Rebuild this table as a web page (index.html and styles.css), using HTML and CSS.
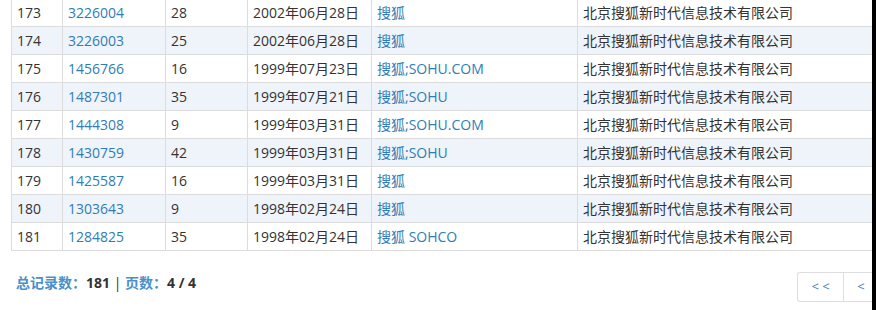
FILE: index.html
```html
<!DOCTYPE html>
<html lang="zh">
<head>
<meta charset="utf-8">
<link rel="stylesheet" href="styles.css">
</head>
<body>
<div class="frame">
  <div class="content">
    <table class="grid">
      <colgroup>
        <col class="c1"><col class="c2"><col class="c3"><col class="c4"><col class="c5"><col class="c6">
      </colgroup>
      <tbody>
        <tr><td>173</td><td><a>3226004</a></td><td>28</td><td>2002年06月28日</td><td><a>搜狐</a></td><td>北京搜狐新时代信息技术有限公司</td></tr>
        <tr><td>174</td><td><a>3226003</a></td><td>25</td><td>2002年06月28日</td><td><a>搜狐</a></td><td>北京搜狐新时代信息技术有限公司</td></tr>
        <tr><td>175</td><td><a>1456766</a></td><td>16</td><td>1999年07月23日</td><td><a>搜狐;SOHU.COM</a></td><td>北京搜狐新时代信息技术有限公司</td></tr>
        <tr><td>176</td><td><a>1487301</a></td><td>35</td><td>1999年07月21日</td><td><a>搜狐;SOHU</a></td><td>北京搜狐新时代信息技术有限公司</td></tr>
        <tr><td>177</td><td><a>1444308</a></td><td>9</td><td>1999年03月31日</td><td><a>搜狐;SOHU.COM</a></td><td>北京搜狐新时代信息技术有限公司</td></tr>
        <tr><td>178</td><td><a>1430759</a></td><td>42</td><td>1999年03月31日</td><td><a>搜狐;SOHU</a></td><td>北京搜狐新时代信息技术有限公司</td></tr>
        <tr><td>179</td><td><a>1425587</a></td><td>16</td><td>1999年03月31日</td><td><a>搜狐</a></td><td>北京搜狐新时代信息技术有限公司</td></tr>
        <tr><td>180</td><td><a>1303643</a></td><td>9</td><td>1998年02月24日</td><td><a>搜狐</a></td><td>北京搜狐新时代信息技术有限公司</td></tr>
        <tr><td>181</td><td><a>1284825</a></td><td>35</td><td>1998年02月24日</td><td><a>搜狐 SOHCO</a></td><td>北京搜狐新时代信息技术有限公司</td></tr>
      </tbody>
    </table>
    <div class="footer">
      <div class="summary">
        <span class="label">总记录数：</span><b>181</b><span class="sep"> | </span><span class="label">页数：</span><b>4 / 4</b>
      </div>
      <div class="pager">
        <span class="pbtn first">&lt; &lt;</span><span class="pbtn prev">&lt;</span>
      </div>
    </div>
  </div>
  <div class="edge"></div>
</div>
</body>
</html>
```

FILE: styles.css
```css
html, body {
  margin: 0;
  padding: 0;
  background: #fff;
}
body {
  width: 876px;
  height: 310px;
  overflow: hidden;
  font-family: "Open Sans", "Noto Sans CJK SC", sans-serif;
  font-size: 14px;
  color: #333;
}
.frame {
  display: flex;
  width: 876px;
  height: 310px;
}
.content {
  width: 872px;
  overflow: hidden;
  flex: none;
}
.edge {
  width: 4px;
  background: #000;
  flex: none;
}
.grid {
  border-collapse: collapse;
  table-layout: fixed;
  width: 1000px;
  margin: -2px 0 0 11px;
}
.c1 { width: 51px; }
.c2 { width: 103px; }
.c3 { width: 82px; }
.c4 { width: 124px; }
.c5 { width: 206px; }
.c6 { width: 434px; }
.grid td {
  border: 1px solid #dcdcdc;
  height: 27px;
  padding: 0 0 0 5px;
  line-height: 27px;
  white-space: nowrap;
  overflow: hidden;
}
.grid tr:nth-child(even) td {
  background: #eff3fa;
}
.grid a {
  color: #2f7db5;
  text-decoration: none;
}
.footer {
  display: flex;
  justify-content: space-between;
  align-items: flex-start;
  margin-top: 21px;
}
.summary {
  padding-left: 16px;
  padding-top: 1px;
  font-size: 14px;
  line-height: 20px;
  font-weight: 600;
}
.summary .label {
  color: #4a8fc7;
}
.summary b {
  color: #333;
  font-weight: 700;
}
.summary .sep {
  color: #333;
  font-weight: 400;
}
.pager {
  display: flex;
  margin-right: -7px;
}
.pbtn {
  display: block;
  line-height: 27px;
  border: 1px solid #dedede;
  color: #3a7fb8;
  font-size: 13px;
  text-align: center;
  box-sizing: border-box;
  height: 30px;
}
.pbtn.first {
  border-radius: 3px 0 0 3px;
  border-right: none;
  width: 46px;
}
.pbtn.prev {
  width: 36px;
}
```
